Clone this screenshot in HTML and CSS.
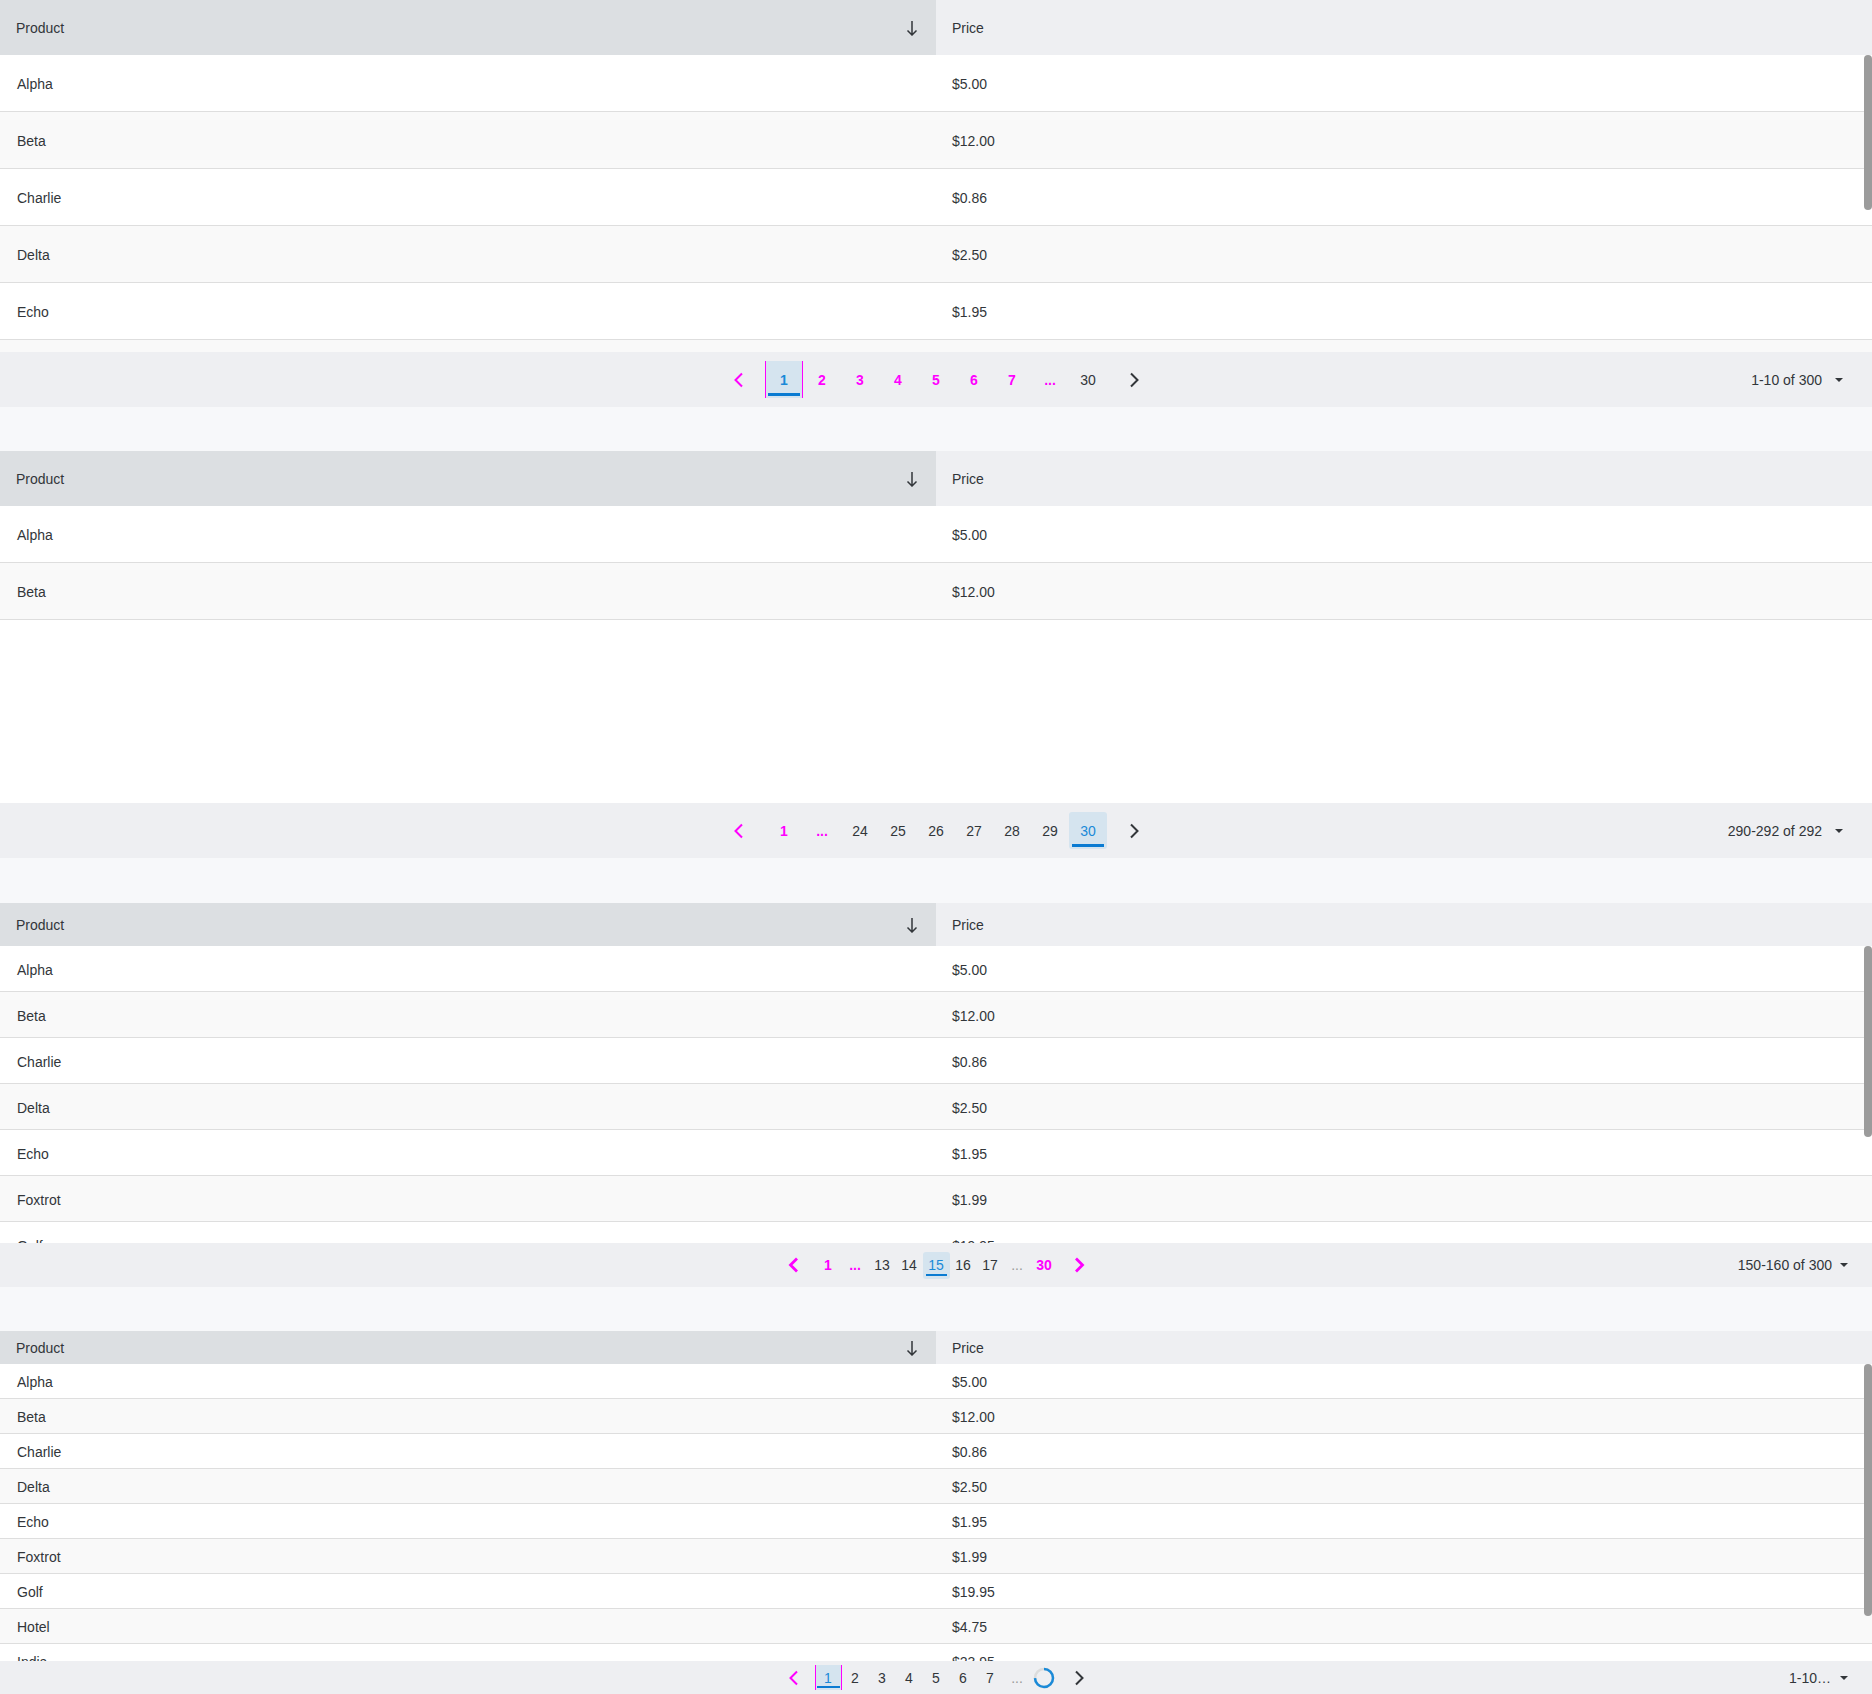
FILE: index.html
```html
<!DOCTYPE html>
<html lang="en">
<head>
<meta charset="utf-8">
<title>Grid pagination</title>
<link rel="stylesheet" href="styles.css">
</head>
<body>

<!-- Grid 1 : large -->
<section class="grid lg">
  <div class="head">
    <div class="hcell sorted"><span>Product</span><svg class="sort" viewBox="0 0 12 16" width="12" height="16"><path d="M6 1v14M1.5 10.5L6 15l4.5-4.5"/></svg></div>
    <div class="hcell">Price</div>
  </div>
  <div class="body">
    <div class="row"><div class="cell">Alpha</div><div class="cell">$5.00</div></div>
    <div class="row"><div class="cell">Beta</div><div class="cell">$12.00</div></div>
    <div class="row"><div class="cell">Charlie</div><div class="cell">$0.86</div></div>
    <div class="row"><div class="cell">Delta</div><div class="cell">$2.50</div></div>
    <div class="row"><div class="cell">Echo</div><div class="cell">$1.95</div></div>
    <div class="row"><div class="cell"></div><div class="cell"></div></div>
    <div class="thumb" style="height:155px"></div>
  </div>
  <div class="pager">
    <div></div>
    <div class="pages">
      <span class="nav mg"><svg viewBox="0 0 11 16" width="11" height="16"><path d="M9 1.5L2.5 8 9 14.5"/></svg></span>
      <span class="pg active edge mg">1</span>
      <span class="pg mg">2</span>
      <span class="pg mg">3</span>
      <span class="pg mg">4</span>
      <span class="pg mg">5</span>
      <span class="pg mg">6</span>
      <span class="pg mg">7</span>
      <span class="pg mg">...</span>
      <span class="pg">30</span>
      <span class="nav"><svg viewBox="0 0 11 16" width="11" height="16"><path d="M2 1.5L8.5 8 2 14.5"/></svg></span>
    </div>
    <div class="size"><span class="size-text">1-10 of 300</span><svg class="caret" viewBox="0 0 8 4" width="8" height="4"><path d="M0 0h8L4 4z"/></svg></div>
  </div>
</section>

<!-- Grid 2 : large, last page -->
<section class="grid lg">
  <div class="head">
    <div class="hcell sorted"><span>Product</span><svg class="sort" viewBox="0 0 12 16" width="12" height="16"><path d="M6 1v14M1.5 10.5L6 15l4.5-4.5"/></svg></div>
    <div class="hcell">Price</div>
  </div>
  <div class="body">
    <div class="row"><div class="cell">Alpha</div><div class="cell">$5.00</div></div>
    <div class="row"><div class="cell">Beta</div><div class="cell">$12.00</div></div>
  </div>
  <div class="pager">
    <div></div>
    <div class="pages">
      <span class="nav mg"><svg viewBox="0 0 11 16" width="11" height="16"><path d="M9 1.5L2.5 8 9 14.5"/></svg></span>
      <span class="pg mg">1</span>
      <span class="pg mg">...</span>
      <span class="pg">24</span>
      <span class="pg">25</span>
      <span class="pg">26</span>
      <span class="pg">27</span>
      <span class="pg">28</span>
      <span class="pg">29</span>
      <span class="pg active">30</span>
      <span class="nav"><svg viewBox="0 0 11 16" width="11" height="16"><path d="M2 1.5L8.5 8 2 14.5"/></svg></span>
    </div>
    <div class="size"><span class="size-text">290-292 of 292</span><svg class="caret" viewBox="0 0 8 4" width="8" height="4"><path d="M0 0h8L4 4z"/></svg></div>
  </div>
</section>

<!-- Grid 3 : medium -->
<section class="grid md">
  <div class="head">
    <div class="hcell sorted"><span>Product</span><svg class="sort" viewBox="0 0 12 16" width="12" height="16"><path d="M6 1v14M1.5 10.5L6 15l4.5-4.5"/></svg></div>
    <div class="hcell">Price</div>
  </div>
  <div class="body">
    <div class="row"><div class="cell">Alpha</div><div class="cell">$5.00</div></div>
    <div class="row"><div class="cell">Beta</div><div class="cell">$12.00</div></div>
    <div class="row"><div class="cell">Charlie</div><div class="cell">$0.86</div></div>
    <div class="row"><div class="cell">Delta</div><div class="cell">$2.50</div></div>
    <div class="row"><div class="cell">Echo</div><div class="cell">$1.95</div></div>
    <div class="row"><div class="cell">Foxtrot</div><div class="cell">$1.99</div></div>
    <div class="row"><div class="cell">Golf</div><div class="cell">$19.95</div></div>
    <div class="thumb" style="height:191px"></div>
  </div>
  <div class="pager">
    <div></div>
    <div class="pages">
      <span class="nav mg thick"><svg viewBox="0 0 11 16" width="11" height="16"><path d="M9 1.5L2.5 8 9 14.5"/></svg></span>
      <span class="pg mg">1</span>
      <span class="pg mg">...</span>
      <span class="pg">13</span>
      <span class="pg">14</span>
      <span class="pg active">15</span>
      <span class="pg">16</span>
      <span class="pg">17</span>
      <span class="pg dots">...</span>
      <span class="pg mg">30</span>
      <span class="nav mg thick"><svg viewBox="0 0 11 16" width="11" height="16"><path d="M2 1.5L8.5 8 2 14.5"/></svg></span>
    </div>
    <div class="size"><span class="size-text">150-160 of 300</span><svg class="caret" viewBox="0 0 8 4" width="8" height="4"><path d="M0 0h8L4 4z"/></svg></div>
  </div>
</section>

<!-- Grid 4 : small -->
<section class="grid sm">
  <div class="head">
    <div class="hcell sorted"><span>Product</span><svg class="sort" viewBox="0 0 12 16" width="12" height="16"><path d="M6 1v14M1.5 10.5L6 15l4.5-4.5"/></svg></div>
    <div class="hcell">Price</div>
  </div>
  <div class="body">
    <div class="row"><div class="cell">Alpha</div><div class="cell">$5.00</div></div>
    <div class="row"><div class="cell">Beta</div><div class="cell">$12.00</div></div>
    <div class="row"><div class="cell">Charlie</div><div class="cell">$0.86</div></div>
    <div class="row"><div class="cell">Delta</div><div class="cell">$2.50</div></div>
    <div class="row"><div class="cell">Echo</div><div class="cell">$1.95</div></div>
    <div class="row"><div class="cell">Foxtrot</div><div class="cell">$1.99</div></div>
    <div class="row"><div class="cell">Golf</div><div class="cell">$19.95</div></div>
    <div class="row"><div class="cell">Hotel</div><div class="cell">$4.75</div></div>
    <div class="row"><div class="cell">India</div><div class="cell">$23.95</div></div>
    <div class="thumb" style="height:252px"></div>
  </div>
  <div class="pager">
    <div></div>
    <div class="pages">
      <span class="nav mg"><svg viewBox="0 0 11 16" width="11" height="16"><path d="M9 1.5L2.5 8 9 14.5"/></svg></span>
      <span class="pg active edge">1</span>
      <span class="pg">2</span>
      <span class="pg">3</span>
      <span class="pg">4</span>
      <span class="pg">5</span>
      <span class="pg">6</span>
      <span class="pg">7</span>
      <span class="pg dots">...</span>
      <span class="pg"><svg class="spinner" viewBox="0 0 22 22" width="22" height="22"><circle class="track" cx="11" cy="11" r="9"/><circle class="arc" cx="11" cy="11" r="9"/></svg></span>
      <span class="nav"><svg viewBox="0 0 11 16" width="11" height="16"><path d="M2 1.5L8.5 8 2 14.5"/></svg></span>
    </div>
    <div class="size"><span class="size-text trunc">1-10 of 300</span><svg class="caret" viewBox="0 0 8 4" width="8" height="4"><path d="M0 0h8L4 4z"/></svg></div>
  </div>
</section>

</body>
</html>
```

FILE: styles.css
```css
* { box-sizing: border-box; }

html, body {
  margin: 0;
  padding: 0;
}

body {
  background: #f7f8fa;
  font-family: "Liberation Sans", Arial, sans-serif;
  font-size: 14px;
  color: #32363a;
}

.grid {
  display: flex;
  flex-direction: column;
  margin-bottom: 44px;
}

.lg + .md { margin-top: 45px; }

.grid:last-child { margin-bottom: 0; }

/* header */
.head {
  display: grid;
  grid-template-columns: 936px 1fr;
  background: #eeeff2;
}

.hcell {
  display: flex;
  align-items: center;
  justify-content: space-between;
  padding: 0 18px 0 16px;
}

.hcell.sorted { background: #dcdfe2; }

.sort {
  fill: none;
  stroke: #32363a;
  stroke-width: 1.5;
}

.lg .head { height: 55px; }
.md .head { height: 43px; }
.sm .head { height: 33px; }

/* body */
.body {
  position: relative;
  height: 297px;
  overflow: hidden;
  background: #ffffff;
}

.row {
  display: grid;
  grid-template-columns: 936px 1fr;
  align-items: center;
  padding-top: 2px;
  border-bottom: 1px solid #dedede;
  background: #ffffff;
}

.row:nth-child(even) { background: #f9f9f9; }

.lg .row { height: 57px; }
.md .row { height: 46px; }
.sm .row { height: 35px; }

.cell { padding-left: 17px; }
.cell + .cell { padding-left: 16px; }

.thumb {
  position: absolute;
  top: 0;
  right: 0;
  width: 8px;
  border-radius: 4px;
  background: #9b9b9b;
}

/* pager */
.pager {
  display: grid;
  grid-template-columns: 1fr auto 1fr;
  align-items: center;
  background: #eeeff2;
}

.lg .pager { height: 55px; }
.md .pager { height: 44px; }
.sm .pager { height: 33px; }

.pages {
  display: flex;
  align-items: center;
}

.pg, .nav {
  position: relative;
  display: flex;
  align-items: center;
  justify-content: center;
  color: #32363a;
  border-radius: 3px;
}

.lg .pg, .lg .nav { width: 38px; height: 37px; }
.md .pg, .md .nav { width: 27px; height: 27px; }
.sm .pg, .sm .nav { width: 27px; height: 25px; }

.lg .nav:first-child { margin-right: 8px; }
.lg .nav:last-child { margin-left: 8px; }
.md .nav:first-child, .sm .nav:first-child { margin-right: 8px; }
.md .nav:last-child, .sm .nav:last-child { margin-left: 8px; }

.nav svg {
  fill: none;
  stroke: #32363a;
  stroke-width: 2;
}

.nav.mg svg { stroke: #ff00ff; }
.nav.thick svg { stroke-width: 2.8; }

.mg {
  color: #ff00ff;
  font-weight: bold;
}

.dots { color: #9a9a9a; }

.pg.active {
  background: #d5e4ef;
  color: #1a8ad8;
}

.pg.active::after {
  content: "";
  position: absolute;
  left: 3px;
  right: 3px;
  bottom: 2px;
  height: 3px;
  background: #0a7bd2;
}

.md .pg.active::after { height: 2px; bottom: 3px; }
.sm .pg.active::after { height: 2px; bottom: 2px; left: 2px; right: 2px; }

.pg.edge {
  box-shadow: inset 1px 0 0 #ff00ff, inset -1px 0 0 #ff00ff;
  border-radius: 0;
}

.spinner .track {
  fill: none;
  stroke: #dcdcdc;
  stroke-width: 2.5;
}

.spinner .arc {
  fill: none;
  stroke: #1a8ad8;
  stroke-width: 2.5;
  stroke-dasharray: 42 57;
  transform: rotate(-90deg);
  transform-origin: 11px 11px;
}

/* page size */
.size {
  justify-self: end;
  display: flex;
  align-items: center;
}

.lg .size { padding-right: 29px; gap: 13px; }
.md .size, .sm .size { padding-right: 24px; gap: 8px; }

.caret { fill: #32363a; }

.trunc {
  max-width: 43px;
  overflow: hidden;
  white-space: nowrap;
  text-overflow: ellipsis;
}
```
